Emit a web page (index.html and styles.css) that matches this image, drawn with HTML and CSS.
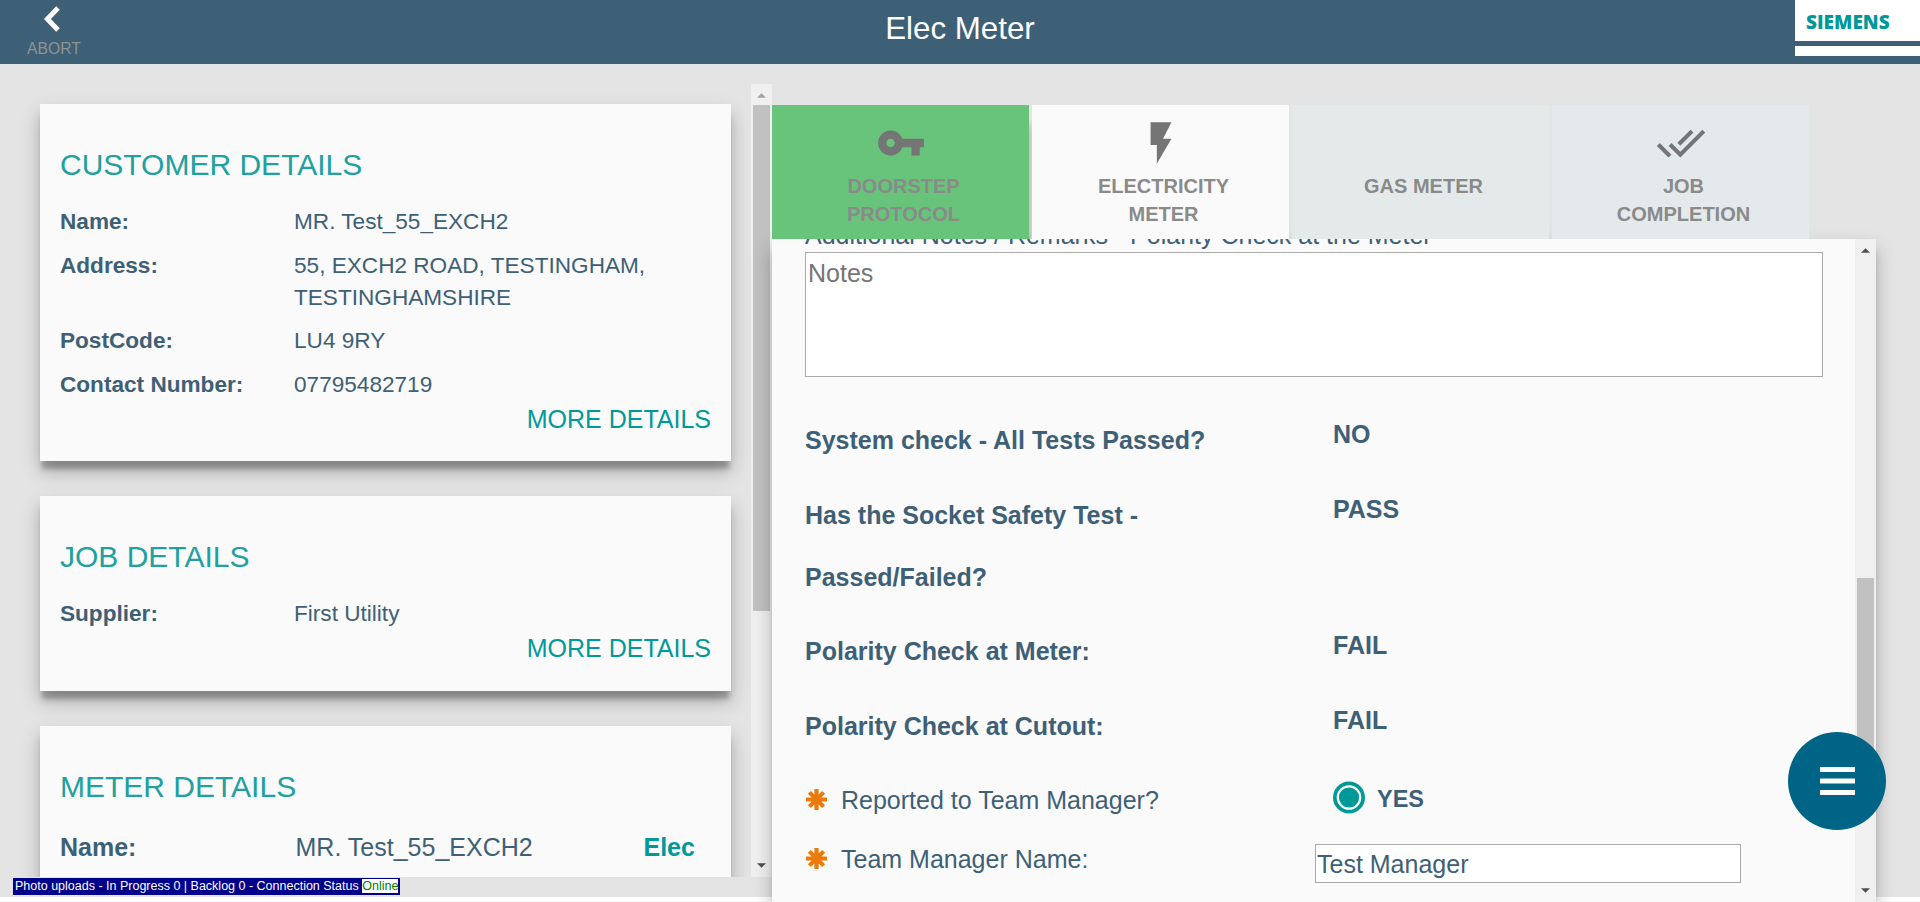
FILE: index.html
```html
<!DOCTYPE html>
<html lang="en">
<head>
<meta charset="utf-8">
<title>Elec Meter</title>
<link rel="stylesheet" href="styles.css">
</head>
<body>
<header class="topbar">
  <div class="abort">
    <svg class="abort-icon" viewBox="0 0 16 26"><path d="M14 2 L3.4 13 L14 24" fill="none" stroke="#fff" stroke-width="5"/></svg>
    <span>ABORT</span>
  </div>
  <h1 class="title">Elec Meter</h1>
  <div class="brand"><span class="brand-name">SIEMENS</span><span class="brand-line"></span></div>
</header>
<main class="page">
  <section class="left">
    <div class="cards">
      <article class="card">
        <h2>CUSTOMER DETAILS</h2>
        <dl>
          <dt>Name:</dt><dd>MR. Test_55_EXCH2</dd>
          <dt>Address:</dt><dd>55, EXCH2 ROAD, TESTINGHAM, TESTINGHAMSHIRE</dd>
          <dt>PostCode:</dt><dd>LU4 9RY</dd>
          <dt>Contact Number:</dt><dd>07795482719</dd>
        </dl>
        <div class="more">MORE DETAILS</div>
      </article>
      <article class="card">
        <h2>JOB DETAILS</h2>
        <dl><dt>Supplier:</dt><dd>First Utility</dd></dl>
        <div class="more">MORE DETAILS</div>
      </article>
      <article class="card card-meter">
        <h2>METER DETAILS</h2>
        <div class="meter-row"><b>Name:</b><span>MR. Test_55_EXCH2</span><strong>Elec</strong></div>
      </article>
    </div>
    <div class="scroll scroll-left">
      <svg class="arrow" viewBox="0 0 10 5"><path d="M0 5 L5 0 L10 5z" fill="#a3a3a3"/></svg>
      <div class="thumb"></div>
      <svg class="arrow arrow-end" viewBox="0 0 10 5"><path d="M0 0 L5 5 L10 0z" fill="#505050"/></svg>
    </div>
  </section>
  <section class="right">
    <nav class="tabs">
      <div class="tab tab-done">
        <svg class="tab-icon" viewBox="0 0 24 24"><path fill="#757575" d="M12.65 10C11.83 7.67 9.61 6 7 6c-3.31 0-6 2.69-6 6s2.69 6 6 6c2.61 0 4.83-1.67 5.65-4H17v4h4v-4h2v-4H12.65zM7 14c-1.1 0-2-.9-2-2s.9-2 2-2 2 .9 2 2-.9 2-2 2z"/></svg>
        <span>DOORSTEP<br>PROTOCOL</span>
      </div>
      <div class="tab tab-active">
        <svg class="tab-icon" viewBox="0 0 24 24"><path fill="#757575" d="M7 2v11h3v9l7-12h-4l4-8z"/></svg>
        <span>ELECTRICITY<br>METER</span>
      </div>
      <div class="tab tab-gas">
        <div class="tab-icon"></div>
        <span>GAS METER</span>
      </div>
      <div class="tab tab-job">
        <svg class="tab-icon" viewBox="0 0 24 24"><path fill="#757575" d="M18 7l-1.41-1.41-6.34 6.34 1.41 1.41L18 7zm4.24-1.41L11.66 16.17 7.48 12l-1.41 1.41L11.66 19l12-12-1.42-1.41zM.41 13.41L6 19l1.41-1.41L1.83 12 .41 13.41z"/></svg>
        <span>JOB<br>COMPLETION</span>
      </div>
    </nav>
    <div class="panel">
      <div class="form">
        <div class="notes-label">Additional Notes / Remarks - Polarity Check at the Meter</div>
        <div class="notes">Notes</div>
        <div class="row"><div class="label">System check - All Tests Passed?</div><div class="value">NO</div></div>
        <div class="row"><div class="label">Has the Socket Safety Test -<br>Passed/Failed?</div><div class="value">PASS</div></div>
        <div class="row"><div class="label">Polarity Check at Meter:</div><div class="value">FAIL</div></div>
        <div class="row"><div class="label">Polarity Check at Cutout:</div><div class="value">FAIL</div></div>
        <div class="row row-req">
          <div class="label"><svg class="star" viewBox="-10 -10 20 20"><path d="M0-10V10M-10 0H10M-6.8-6.8L6.8 6.8M-6.8 6.8L6.8-6.8" stroke="#ec7a08" stroke-width="4"/></svg>Reported to Team Manager?</div>
          <div class="value value-radio"><svg class="radio" viewBox="0 0 32 32"><circle cx="16" cy="16" r="16" fill="#009999"/><circle cx="16" cy="16" r="11.2" fill="none" stroke="#fff" stroke-width="2.2"/></svg><span>YES</span></div>
        </div>
        <div class="row row-req">
          <div class="label"><svg class="star" viewBox="-10 -10 20 20"><path d="M0-10V10M-10 0H10M-6.8-6.8L6.8 6.8M-6.8 6.8L6.8-6.8" stroke="#ec7a08" stroke-width="4"/></svg>Team Manager Name:</div>
          <div class="input">Test Manager</div>
        </div>
      </div>
      <div class="scroll scroll-right">
        <svg class="arrow" viewBox="0 0 10 5"><path d="M0 5 L5 0 L10 5z" fill="#505050"/></svg>
        <div class="thumb"></div>
        <svg class="arrow arrow-end" viewBox="0 0 10 5"><path d="M0 0 L5 5 L10 0z" fill="#505050"/></svg>
      </div>
    </div>
  </section>
</main>
<div class="status">Photo uploads - In Progress 0 | Backlog 0 - Connection Status <span>Online</span></div>
<div class="fab"><svg viewBox="0 0 35 28"><path d="M0 2.5H35M0 14H35M0 25.5H35" stroke="#fff" stroke-width="4.8"/></svg></div>
</body>
</html>
```
FILE: styles.css
```css
* { box-sizing: border-box; }
body {
  margin: 0;
  height: 902px;
  overflow: hidden;
  background: #fff;
  color: #3e6077;
  font-family: "Liberation Sans", Arial, sans-serif;
}
h1, h2, dl, dd { margin: 0; font-weight: 400; }

.topbar {
  height: 64px;
  background: #3e6077;
  display: grid;
  grid-template-columns: 125px 1fr 125px;
}
.abort {
  padding: 6px 0 0 27px;
  font-size: 15.7px;
  line-height: 18px;
  color: #8c9491;
  display: flex;
  flex-direction: column;
}
.abort-icon { width: 16px; height: 26px; margin: 0 0 8px 17px; }
.title { color: #fff; font-size: 31.3px; line-height: 57px; text-align: center; }
.brand { background: #fff; height: 56px; display: flex; flex-direction: column; }
.brand-name {
  height: 41px;
  padding-left: 11px;
  font: 800 19px/45px "Open Sans", "Noto Sans", sans-serif;
  color: #009999;
}
.brand-line { height: 5px; background: #3e6077; }

.page {
  height: 833px;
  background: #e4e4e4;
  display: grid;
  grid-template-columns: 772px 1104px;
}
.left {
  margin-top: 20px;
  height: 793px;
  display: grid;
  grid-template-columns: 751px 21px;
  overflow: hidden;
}
.cards { padding: 20px 20px 0 40px; height: 793px; overflow: hidden; }
.card {
  background: #fafafa;
  height: 357px;
  margin-bottom: 35px;
  padding: 44px 20px 0;
  box-shadow: 0 10px 5px -2px rgba(0,0,0,.25), 0 10px 18px rgba(0,0,0,.26);
}
.card:nth-child(2) { height: 195px; }
.card h2 { font-size: 30px; line-height: 34px; color: #20a09e; margin-bottom: 24px; }
.card dl {
  display: grid;
  grid-template-columns: 234px 380px;
  row-gap: 11.5px;
  font-size: 22.6px;
  line-height: 32px;
}
.card dt { font-weight: 700; }
.more { font-size: 25px; line-height: 28px; color: #009999; text-align: right; margin-top: 4px; }
.card-meter h2 { margin-bottom: 26px; }
.meter-row {
  display: grid;
  grid-template-columns: 235.5px 348px 1fr;
  font-size: 25px;
  line-height: 34px;
}
.meter-row strong { color: #009999; }

.scroll { background: #f0f0f0; display: flex; flex-direction: column; align-items: center; }
.arrow { width: 9px; height: 5px; margin-top: 9px; flex: none; }
.arrow-end { margin: auto 0 9px; }
.thumb { width: 17px; background: #c1c1c1; margin-top: 7px; flex: none; }
.scroll-left .thumb { height: 506px; }
.scroll-right .thumb { height: 212px; margin-top: 325px; }

.tabs { margin-top: 41px; display: flex; gap: 3px; height: 134px; position: relative; z-index: 1; }
.tab {
  width: 257px;
  padding-top: 13px;
  display: flex;
  flex-direction: column;
  align-items: center;
  text-align: center;
  font-size: 20px;
  font-weight: 700;
  line-height: 28px;
  color: #8a8a8a;
}
.tab-icon { width: 50px; height: 50px; margin-bottom: 4px; flex: none; }
.tab span { padding-left: 6px; }
.tab-done { background: #68c47a; box-shadow: 2px 18px 8px -2px rgba(0,0,0,.3); clip-path: inset(0 -3px 0 0); }
.tab-active { background: #fafafa; z-index: 1; }
.tab-gas { background: #e4eae9; }
.tab-job { background: #e4eaec; }

.panel {
  position: relative;
  height: 663px;
  background: #fafafa;
  display: grid;
  grid-template-columns: 1083px 21px;
  box-shadow: 0 10px 5px -2px rgba(0,0,0,.25), 0 10px 18px rgba(0,0,0,.26);
}
.form { height: 663px; padding-left: 33px; overflow: hidden; font-size: 25px; }
.notes-label { line-height: 30px; margin-top: -19px; white-space: nowrap; height: 32px; }
.notes {
  width: 1018px;
  height: 125px;
  border: 1px solid #a9a9a9;
  background: #fff;
  color: #757575;
  padding: 4px 2px;
  margin-bottom: 32px;
  line-height: 32px;
}
.row {
  display: grid;
  grid-template-columns: 528px 1fr;
  padding-bottom: 12.6px;
  font-weight: 700;
  line-height: 62px;
}
.value { line-height: 50px; }
.row-req { height: 59px; padding: 0; }
.row-req .label { font-weight: 400; display: flex; align-items: center; height: 62px; }
.star { width: 21px; height: 21px; margin: 0 14px 0 1px; position: relative; top: -1px; }
.value-radio { display: flex; align-items: center; height: 56px; font-size: 23.5px; }
.value-radio span { padding-top: 3px; }
.radio { width: 32px; height: 33px; margin-right: 12px; }
.input {
  width: 426px;
  height: 39px;
  margin: 16px 0 0 -18px;
  border: 1px solid #a9a9a9;
  background: #fff;
  padding-left: 1px;
  font-weight: 400;
  line-height: 39px;
}

.status {
  position: absolute;
  left: 13px;
  top: 878px;
  height: 17px;
  padding: 1px 2px;
  background: #00008b;
  color: #fff;
  font-size: 12.5px;
  line-height: 15px;
  white-space: nowrap;
}
.status span { display: inline-block; height: 14px; line-height: 14px; background: #fff; color: #008000; }
.fab {
  position: absolute;
  left: 1788px;
  top: 732px;
  width: 98px;
  height: 98px;
  border-radius: 50%;
  background: #006487;
  display: grid;
  place-items: center;
}
.fab svg { width: 35px; height: 28px; }
```
